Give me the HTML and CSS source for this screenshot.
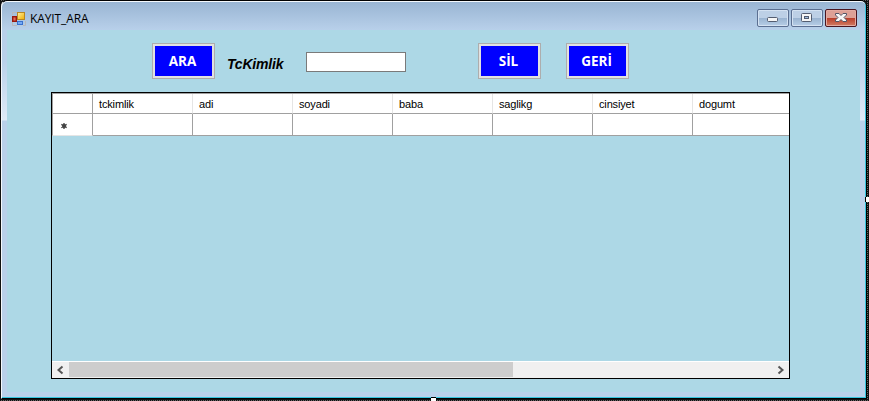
FILE: index.html
```html
<!DOCTYPE html>
<html lang="tr">
<head>
<meta charset="utf-8">
<title>KAYIT_ARA</title>
<link rel="stylesheet" href="styles.css">
</head>
<body>
<main class="window">
  <header class="titlebar">
    <svg class="app-icon" width="14" height="14" viewBox="0 0 14 14">
      <defs><linearGradient id="gold" x2="1" y2="1"><stop stop-color="#fff0a0"/><stop offset="1" stop-color="#f0ae00"/></linearGradient></defs>
      <path d="M.5 3V.5H5M.5 9v4.500H5M11 13.500h2.500V9" fill="none" stroke="#b9b9b9"/>
      <rect x="5.500" y=".5" width="7" height="7" fill="url(#gold)" stroke="#b98620"/>
      <rect x=".7" y="4.700" width="3.600" height="4.600" fill="#e66b50" stroke="#98180f" stroke-width="1.400"/>
      <rect x="5.500" y="9.500" width="5" height="3" fill="#75aaf5" stroke="#3971ce"/>
    </svg>
    <h1>KAYIT_ARA</h1>
    <div class="controls">
      <span class="control"><svg width="30" height="16" viewBox="0 0 30 16"><rect x="9.500" y="7.500" width="10" height="4" rx="1" fill="#f6f6f6" stroke="#545d70"/></svg></span>
      <span class="control"><svg width="30" height="16" viewBox="0 0 30 16"><rect x="9.500" y="3.500" width="10" height="8" rx="1" fill="#f6f6f6" stroke="#545d70"/><rect x="12.500" y="6.500" width="4" height="2" fill="#9ebbdc" stroke="#545d70"/></svg></span>
      <span class="control close"><svg width="30" height="16" viewBox="0 0 30 16"><path d="M9.500 3.500h3.500l2 2 2-2h3.500v1.500L18 7.500l2.500 2.500v1.500H17l-2-2-2 2H9.500V10L12 7.500 9.500 5z" fill="#f7f7f7" stroke="#545567" stroke-linejoin="round"/></svg></span>
    </div>
  </header>
  <section class="form">
    <div class="toolbar">
      <button class="button">ARA</button>
      <label for="tc">TcKimlik</label>
      <input id="tc" type="text">
      <button class="button delete">SİL</button>
      <button class="button back">GERİ</button>
    </div>
    <div class="grid">
      <div class="row head">
        <span class="cell"></span><span class="cell">tckimlik</span><span class="cell">adi</span><span class="cell">soyadi</span><span class="cell">baba</span><span class="cell">saglikg</span><span class="cell">cinsiyet</span><span class="cell">dogumt</span>
      </div>
      <div class="row entry">
        <span class="cell marker"><svg width="6" height="6" viewBox="0 0 6 6"><path d="M3 0v6M.3 1.300l5.400 3.400M.3 4.700l5.400-3.400" stroke="#555" stroke-width="1.500"/><circle cx="3" cy="3" r="2.100" fill="#444"/></svg></span><span class="cell"></span><span class="cell"></span><span class="cell"></span><span class="cell"></span><span class="cell"></span><span class="cell"></span><span class="cell"></span>
      </div>
      <div class="scrollbar">
        <span class="arrow"><svg width="17" height="16" viewBox="0 0 17 16"><path d="M10.500 4.500L6.500 8l4 3.500" fill="none" stroke="#555" stroke-width="2"/></svg></span>
        <span class="thumb"></span>
        <span class="arrow next"><svg width="17" height="16" viewBox="0 0 17 16"><path d="M6.500 4.500l4 3.500-4 3.500" fill="none" stroke="#555" stroke-width="2"/></svg></span>
      </div>
    </div>
  </section>
</main>
<i class="handle side"></i>
<i class="handle bottom"></i>
</body>
</html>
```
FILE: styles.css
```css
* { box-sizing: border-box; }
body {
  position: relative;
  width: 869px;
  height: 401px;
  margin: 0;
  padding: 0 0 0 1px;
  overflow: hidden;
  background-color: #151515;
  background-image: conic-gradient(#666 25%, #111 0);
  background-size: 2px 2px;
  font-family: "Liberation Sans", Arial, sans-serif;
}
.window {
  width: 866px;
  height: 399px;
  padding: 0 6px 6px 5px;
  border: 1px solid #000;
  border-left-color: #f4f8fc;
  border-right-color: #000;
  border-radius: 6px 6px 0 0;
  box-shadow: inset -1px -1px #35c4dd, inset 0 1px #f4f8fc, -1px 0 #111;
  background: linear-gradient(#98b4d2 0, #b8d0ea 29px, #b9d1ea 60px, #dfebf7 119px, #b9d1ea 120px);
}
.titlebar { display: flex; height: 29px; padding: 8px 3px 0 5px; }
.app-icon { margin-top: 3px; }
h1 {
  margin: 1px 0 0 4px;
  font: 12px/17px "Open Sans", sans-serif;
  letter-spacing: -.1px;
  color: #000;
}
.controls { display: flex; gap: 2px; margin-left: auto; }
.control {
  width: 32px;
  height: 18px;
  border: 1px solid #5b6f91;
  border-radius: 2px;
  box-shadow: inset 0 0 0 1px #d4e2f2;
  background: linear-gradient(#bdd0e6 0 48%, #99b3d0 50%, #b7cee7);
}
.control svg { display: block; }
.close {
  border-color: #4a1520;
  box-shadow: inset 0 0 0 1px #e4aaa1;
  background: linear-gradient(#dda096 0 48%, #b93c28 50%, #d27c65);
}
.form { height: 362px; padding: 13px 0 0 44px; background: #add8e6; }
.toolbar { display: flex; align-items: flex-start; height: 49px; padding-left: 101px; }
.button {
  width: 63px;
  height: 36px;
  padding: 0 2px 1px 0;
  border: 1px solid #adadad;
  box-shadow: inset 0 0 0 2px #e1e1e1;
  background: #00f;
  color: #fff;
  font: bold 13.5px/18px "Open Sans", sans-serif;
}
label { width: 79px; margin: 12px 0 0 12px; font: italic bold 14px/18px "Liberation Sans", sans-serif; letter-spacing: -.2px; }
input { width: 100px; height: 20px; margin-top: 9px; padding: 0; border: 1px solid #7a7a7a; background: #fff; }
.delete { margin-left: 72px; }
.back { margin-left: 25px; }
.grid {
  display: flex;
  flex-direction: column;
  width: 739px;
  height: 287px;
  border: 1px solid #000;
  overflow: hidden;
}
.row { display: grid; grid-template-columns: 41px repeat(6, 100px) 96px; width: 737px; background: #fff; }
.cell { border-right: 1px solid #a0a0a0; border-bottom: 1px solid #a0a0a0; }
.cell:last-child { border-right: 0; }
.cell:first-child { border-left: 1px solid #a0a0a0; }
.head { height: 21px; border-top: 1px solid #a0a0a0; }
.head .cell { padding: 3px 0 0 6px; font-size: 11px; line-height: 14px; letter-spacing: -.15px; border-right-color: #e5e5e5; }
.head .cell:first-child { border-right-color: #a0a0a0; }
.head .cell:last-child { border-right: 0; }
.entry { height: 22px; }
.entry .marker { padding: 9px 0 0 8px; border-bottom-color: #e5e5e5; }
.marker svg { display: block; }
.scrollbar { display: flex; height: 17px; margin-top: auto; border-top: 1px solid #fff; background: #f0f0f0; }
.arrow { width: 17px; }
.arrow svg { display: block; }
.next { margin-left: auto; }
.thumb { width: 444px; height: 15px; background: #cdcdcd; }
.handle { position: absolute; width: 5px; height: 5px; background: #fff; border: 0 solid #000; }
.side { left: 865px; top: 197px; border-left-width: 1px; }
.bottom { left: 431px; top: 397px; border-top-width: 1px; }
```
